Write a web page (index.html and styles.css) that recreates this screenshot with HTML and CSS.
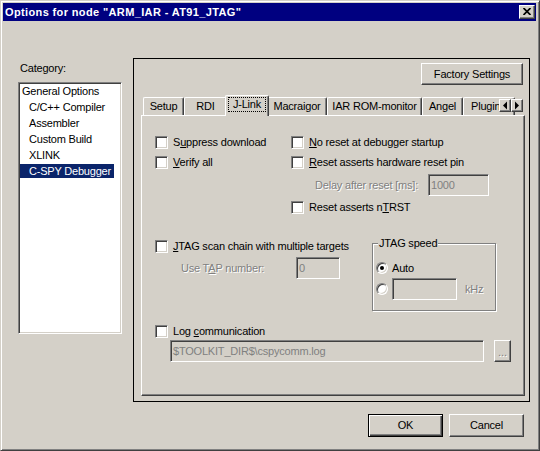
FILE: index.html
```html
<!DOCTYPE html>
<html>
<head>
<meta charset="utf-8">
<link rel="stylesheet" href="styles.css">
</head>
<body>
<div class="window">
  <div class="titlebar">
    <span class="title">Options for node "ARM_IAR - AT91_JTAG"</span>
    <div class="close raised">
      <svg width="8" height="7" viewBox="0 0 8 7"><path d="M0.5 0 L7.5 7 M7.5 0 L0.5 7" stroke="#000" stroke-width="1.7" fill="none"/></svg>
    </div>
  </div>
  <div class="main">
    <div class="category">
      <div class="cat-label">Category:</div>
      <ul class="cat-list">
        <li><span>General Options</span></li>
        <li class="sub"><span>C/C++ Compiler</span></li>
        <li class="sub"><span>Assembler</span></li>
        <li class="sub"><span>Custom Build</span></li>
        <li class="sub"><span>XLINK</span></li>
        <li class="sub sel"><span>C-SPY Debugger</span></li>
      </ul>
    </div>
    <div class="panel">
      <div class="panel-head">
        <div class="btn raised factory">Factory Settings</div>
      </div>
      <div class="tabs">
        <div class="tab tab-setup">Setup</div>
        <div class="tab tab-rdi">RDI</div>
        <div class="tab tab-jlink active"><span class="focus">J-Link</span></div>
        <div class="tab tab-macr">Macraigor</div>
        <div class="tab tab-iar">IAR ROM-monitor</div>
        <div class="tab tab-angel">Angel</div>
        <div class="tab tab-plug">Plugin</div>
        <div class="tab-scroll">
          <div class="arrow raised"><svg width="10" height="11" viewBox="0 0 10 11"><polygon points="3,5.5 7,1.5 7,9.5" fill="#000"/></svg></div>
          <div class="arrow raised"><svg width="10" height="11" viewBox="0 0 10 11"><polygon points="7,5.5 3,1.5 3,9.5" fill="#000"/></svg></div>
        </div>
      </div>
      <div class="page">
        <div class="top">
          <div class="col-left">
            <div class="check"><span class="box"></span><span>S<u>u</u>ppress download</span></div>
            <div class="check gap7"><span class="box"></span><span><u>V</u>erify all</span></div>
          </div>
          <div class="col-right">
            <div class="check"><span class="box"></span><span><u>N</u>o reset at debugger startup</span></div>
            <div class="check gap7"><span class="box"></span><span><u>R</u>eset asserts hardware reset pin</span></div>
            <div class="delay">
              <span class="delay-label disabled">Delay after reset [ms]:</span>
              <span class="field delay-field">1000</span>
            </div>
            <div class="check gap5"><span class="box"></span><span>Reset asserts n<u>T</u>RST</span></div>
          </div>
        </div>
        <div class="mid">
          <div class="mid-left">
            <div class="check"><span class="box"></span><span><u>J</u>TAG scan chain with multiple targets</span></div>
            <div class="tap">
              <span class="tap-label disabled">Use T<u>A</u>P number:</span>
              <span class="field tap-field">0</span>
            </div>
          </div>
          <div class="group">
            <span class="legend">JTAG speed</span>
            <div class="radio-row"><span class="radio on"></span><span>Auto</span></div>
            <div class="radio-row khz-row"><span class="radio"></span><span class="field khz-field"></span><span class="disabled khz">kHz</span></div>
          </div>
        </div>
        <div class="check log"><span class="box"></span><span>Log <u>c</u>ommunication</span></div>
        <div class="path-row">
          <span class="field path">$TOOLKIT_DIR$\cspycomm.log</span>
          <span class="raised browse"><span class="disabled">...</span></span>
        </div>
      </div>
    </div>
  </div>
  <div class="footer">
    <div class="btn raised default">OK</div>
    <div class="btn raised">Cancel</div>
  </div>
</div>
</body>
</html>
```

FILE: styles.css
```css
* { box-sizing: border-box; margin: 0; padding: 0; }
html, body { width: 540px; height: 451px; overflow: hidden; background: #d4d0c8; }
body {
  font-family: "Liberation Sans", Arial, sans-serif;
  font-size: 11px;
  letter-spacing: -0.2px;
  color: #000;
}
u { text-decoration: underline; text-underline-offset: 1px; }

.window {
  width: 540px; height: 451px;
  border: 1px solid;
  border-color: #d4d0c8 #404040 #404040 #d4d0c8;
  box-shadow: inset 1px 1px 0 #fff, inset -1px -1px 0 #808080;
  padding: 2px 3px 3px 2px;
  display: flex; flex-direction: column;
}

.raised {
  background: #d4d0c8;
  border: 1px solid;
  border-color: #fff #404040 #404040 #fff;
  box-shadow: inset -1px -1px 0 #808080;
}

.titlebar {
  height: 18px; flex: none;
  background: #000080;
  display: flex; align-items: center; justify-content: space-between;
  padding-left: 2px;
}
.title { color: #fff; font-weight: bold; letter-spacing: 0.37px; line-height: 18px; }
.close {
  width: 16px; height: 14px; margin-right: 1px;
  display: flex; align-items: center; justify-content: center;
}
.close svg { display: block; margin: 0 1px 1px 0; }

.main { display: flex; gap: 11px; padding: 37px 0 0 15px; height: 381px; flex: none; }

.category { width: 104px; padding-top: 4px; display: flex; flex-direction: column; }
.cat-label { line-height: 13px; height: 13px; padding-left: 2px; }
.cat-list {
  list-style: none;
  margin-top: 7px; height: 252px;
  background: #fff;
  border: 1px solid;
  border-color: #808080 #fff #fff #808080;
  box-shadow: inset 1px 1px 0 #404040, inset -1px -1px 0 #d4d0c8;
  padding: 0 1px;
}
.cat-list li { height: 16px; white-space: nowrap; }
.cat-list span { display: inline-block; line-height: 14px; margin-top: 1px; padding: 0 3px 0 2px; }
.cat-list .sub span { padding-left: 9px; }
.cat-list .sel span { background: #0a246a; color: #fff; }

.panel {
  width: 397px; height: 344px;
  border: 1px solid #000;
  padding: 4px 4px 5px 7px;
  display: flex; flex-direction: column;
}
.panel-head { display: flex; justify-content: flex-end; padding-right: 2px; }
.btn { display: flex; align-items: center; justify-content: center; line-height: 13px; }
.factory { width: 102px; height: 22px; }

.tabs {
  margin-top: 10px; height: 20px; flex: none;
  display: flex; align-items: flex-end;
  padding-left: 2px;
  position: relative;
}
.tab {
  height: 18px; flex: none;
  border: 1px solid; border-bottom: none;
  border-color: #fff #404040 #404040 #fff;
  box-shadow: inset -1px 0 0 #808080;
  border-radius: 2px 2px 0 0;
  padding-top: 2px; line-height: 13px;
  text-align: center; white-space: nowrap;
  background: #d4d0c8;
}
.tab.active {
  height: 21px; margin: 0 -2px -1px;
  position: relative; z-index: 1;
  padding-top: 1px;
}
.focus { display: inline-block; border: 1px dotted #000; padding: 0 4px; line-height: 13px; }
.tab-setup { width: 41px; }
.tab-rdi { width: 43px; }
.tab-jlink { width: 44px; }
.tab-macr { width: 60px; }
.tab-iar { width: 95px; }
.tab-angel { width: 41px; }
.tab-plug { width: 52px; text-align: left; padding-left: 7px; }
.tab-scroll {
  position: absolute; left: 358px; top: 4px;
  display: flex; background: #d4d0c8;
}
.arrow { width: 12px; height: 13px; display: flex; align-items: center; justify-content: center; }
.arrow svg { display: block; }

.page {
  height: 281px; flex: none;
  border: 1px solid;
  border-color: #fff #404040 #404040 #fff;
  box-shadow: inset -1px -1px 0 #808080;
  padding: 20px 0 0 13px;
}

.check { display: flex; align-items: center; gap: 5px; height: 13px; line-height: 13px; white-space: nowrap; }
.box {
  width: 13px; height: 13px; flex: none;
  background: #fff;
  border: 1px solid;
  border-color: #808080 #fff #fff #808080;
  box-shadow: inset 1px 1px 0 #404040, inset -1px -1px 0 #d4d0c8;
}
.gap7 { margin-top: 7px; }
.gap5 { margin-top: 5px; }
.disabled { color: #808080; text-shadow: 1px 1px 0 #fff; }

.field {
  display: flex; align-items: center;
  height: 22px; flex: none;
  border: 1px solid;
  border-color: #808080 #fff #fff #808080;
  box-shadow: inset 1px 1px 0 #404040, inset -1px -1px 0 #d4d0c8;
  background: #d4d0c8; color: #808080;
  padding-left: 2px; line-height: 13px; white-space: nowrap;
}

.top { display: flex; }
.col-left { width: 136px; }
.col-right { display: flex; flex-direction: column; }
.delay { display: flex; align-items: center; height: 22px; margin-top: 5px; }
.delay-label { margin-left: 24px; width: 103px; white-space: nowrap; }
.delay-field { width: 61px; margin-left: 10px; }

.mid { display: flex; margin-top: 26px; }
.mid-left { width: 217px; }
.tap { display: flex; align-items: center; height: 22px; margin-top: 4px; }
.tap-label { margin-left: 26px; width: 115px; white-space: nowrap; }
.tap-field { width: 44px; }

.group {
  position: relative;
  width: 124px; height: 68px; margin-top: 3px;
  border: 1px solid #808080;
  box-shadow: inset 1px 1px 0 #fff, 1px 1px 0 #fff;
  padding: 17px 0 0 3px;
}
.legend { position: absolute; top: -7px; left: 5px; padding: 0 1px; background: #d4d0c8; line-height: 13px; white-space: nowrap; }
.radio-row { display: flex; align-items: center; gap: 4px; height: 13px; }
.khz-row { height: 22px; margin-top: 4px; }
.radio {
  width: 12px; height: 12px; flex: none;
  border-radius: 50%;
  background: #fff;
  border: 1px solid;
  border-color: #808080 #fff #fff #808080;
  box-shadow: inset 1px 1px 0 #404040, inset -1px -1px 0 #d4d0c8;
  position: relative;
}
.radio.on::after {
  content: ""; position: absolute; left: 3px; top: 3px;
  width: 4px; height: 4px; border-radius: 50%; background: #000;
}
.khz-field { width: 65px; }
.khz { margin-left: 4px; }

.log { margin-top: 14px; }
.path-row { display: flex; gap: 10px; margin-top: 2px; padding-left: 15px; }
.path { width: 314px; }
.browse {
  width: 17px; height: 22px;
  display: flex; align-items: flex-end; justify-content: center;
  padding-bottom: 4px; line-height: 10px; letter-spacing: 0;
}

.footer { display: flex; justify-content: flex-end; gap: 6px; margin-top: 12px; padding-right: 12px; }
.footer .btn { width: 75px; height: 23px; }
.btn.default {
  border: 1px solid #000;
  box-shadow: inset 1px 1px 0 #fff, inset -1px -1px 0 #404040, inset -2px -2px 0 #808080;
}
```
